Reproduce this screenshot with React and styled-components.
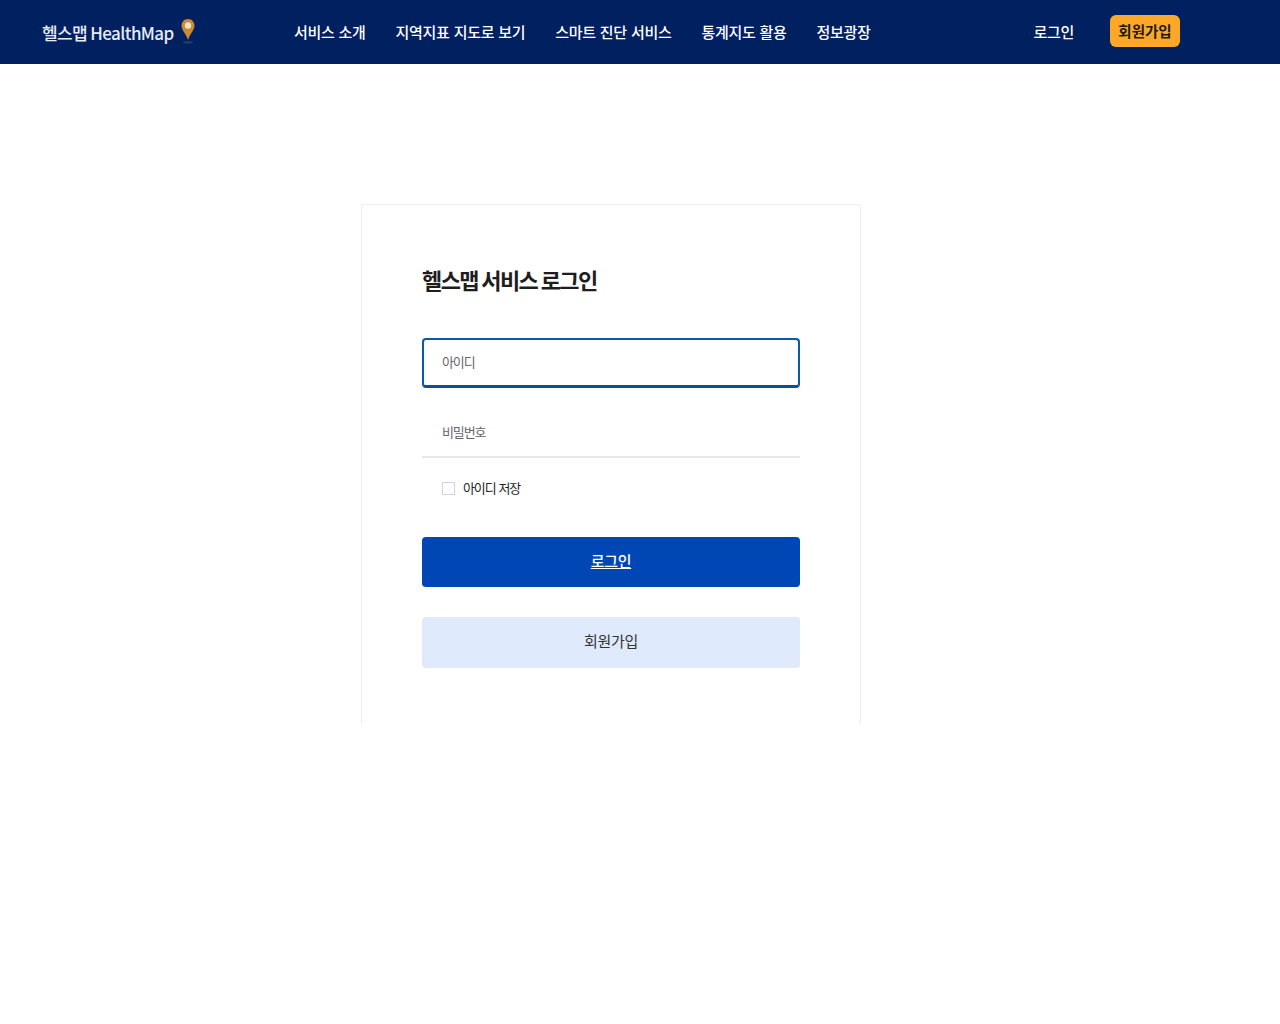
import React from "react";
import styled, { createGlobalStyle } from "styled-components";

const GlobalStyle = createGlobalStyle`
  body {
    margin: 0;
    background: #fff;
    font-family: "Noto Sans CJK KR", "Noto Sans", sans-serif;
  }
`;

const navItems = [
  "서비스 소개",
  "지역지표 지도로 보기",
  "스마트 진단 서비스",
  "통계지도 활용",
  "정보광장",
];

const App = () => {
  return (
    <>
      <GlobalStyle />
      <Header>
        <Logo>
          <LogoText>헬스맵 HealthMap</LogoText>
          <svg width="16" height="28" viewBox="0 0 16 28">
            <path
              d="M8 1C4.2 1 1.5 3.9 1.5 7.6c0 4.6 4.3 8 6.5 14.4 2.2-6.4 6.5-9.8 6.5-14.4C14.5 3.9 11.8 1 8 1z"
              fill="#c98a35"
            />
            <circle cx="8" cy="7.5" r="3.2" fill="#f3e3c4" />
            <ellipse cx="8" cy="24.5" rx="5" ry="1.4" fill="#21386a" />
          </svg>
        </Logo>
        <Nav>
          {navItems.map((item) => (
            <NavLink key={item}>{item}</NavLink>
          ))}
        </Nav>
        <Login>로그인</Login>
        <Join>회원가입</Join>
      </Header>
      <Main>
        <Card>
          <Title>헬스맵 서비스 로그인</Title>
          <Field $focused>아이디</Field>
          <Field>비밀번호</Field>
          <SaveRow>
            <Check />
            <SaveLabel>아이디 저장</SaveLabel>
          </SaveRow>
          <LoginButton>
            <span>로그인</span>
          </LoginButton>
          <JoinButton>회원가입</JoinButton>
        </Card>
      </Main>
    </>
  );
};

export default App;

const Header = styled.header`
  height: 64px;
  display: flex;
  align-items: center;
  padding-left: 42px;
  background-color: #002060;
  color: #fff;
`;

const Logo = styled.div`
  width: 252px;
  flex-shrink: 0;
  display: flex;
  align-items: center;
  gap: 6px;
`;

const LogoText = styled.span`
  font-size: 17px;
  font-weight: 500;
  letter-spacing: -0.6px;
  color: #e6ecf6;
`;

const Nav = styled.nav`
  display: flex;
  gap: 30px;
  flex: 1;
`;

const NavLink = styled.a`
  font-size: 15px;
  font-weight: 500;
  line-height: 20px;
  letter-spacing: -0.3px;
  word-spacing: 1px;
  color: #fff;
  white-space: nowrap;
`;

const Login = styled.a`
  font-size: 15px;
  font-weight: 500;
  line-height: 20px;
  letter-spacing: -0.3px;
  color: #fff;
  margin-right: 36px;
`;

const Join = styled.a`
  box-sizing: border-box;
  width: 70px;
  height: 32px;
  margin: 0 100px 2px 0;
  padding-bottom: 2px;
  display: flex;
  align-items: center;
  justify-content: center;
  border-radius: 6px;
  background-color: #ffa726;
  color: #1a1a1a;
  font-size: 14.5px;
  font-weight: 700;
`;

const Main = styled.main`
  padding: 140px 0 300px 361px;
`;

const Card = styled.div`
  box-sizing: border-box;
  width: 500px;
  height: 520px;
  padding: 60px 60px 0;
  border: 1px solid #eeeeee;
  border-bottom: none;
  border-radius: 4px 4px 0 0;
`;

const Title = styled.h1`
  margin: -2px 0 42px;
  font-size: 22px;
  line-height: 33px;
  font-weight: 700;
  letter-spacing: -1.6px;
  color: #1e1e1e;
`;

const Field = styled.div`
  box-sizing: border-box;
  height: 50px;
  margin-bottom: 20px;
  padding-bottom: 2px;
  display: flex;
  align-items: center;
  font-size: 13px;
  letter-spacing: -1.1px;
  color: #666;
  border-radius: ${(p) => (p.$focused ? "4px" : "0")};
  border: ${(p) => (p.$focused ? "2px solid #0b5aa5" : "none")};
  border-bottom: ${(p) => (p.$focused ? "3px solid #0b4f96" : "2px solid #e8e8e8")};
  padding-left: ${(p) => (p.$focused ? "18px" : "20px")};
`;

const SaveRow = styled.label`
  display: flex;
  align-items: center;
  gap: 8px;
  height: 20px;
  margin: 0 0 39px 20px;
`;

const SaveLabel = styled.span`
  padding-bottom: 2px;
  font-size: 13px;
  letter-spacing: -1.1px;
  word-spacing: 1px;
  color: #1e1e1e;
`;

const Check = styled.span`
  box-sizing: border-box;
  width: 13px;
  height: 13px;
  border: 1px solid #d4d4d4;
`;

const LoginButton = styled.div`
  box-sizing: border-box;
  height: 50px;
  margin-bottom: 30px;
  padding-bottom: 4px;
  display: flex;
  align-items: center;
  justify-content: center;
  border-radius: 4px;
  background-color: #0046b5;
  color: #fff;
  font-size: 15px;
  font-weight: 500;
  letter-spacing: -0.3px;
  text-decoration: underline;
`;

const JoinButton = styled.div`
  box-sizing: border-box;
  height: 51px;
  padding-bottom: 4px;
  display: flex;
  align-items: center;
  justify-content: center;
  border-radius: 4px;
  background-color: #dfeafd;
  color: #333;
  font-size: 15px;
  letter-spacing: -0.3px;
`;
